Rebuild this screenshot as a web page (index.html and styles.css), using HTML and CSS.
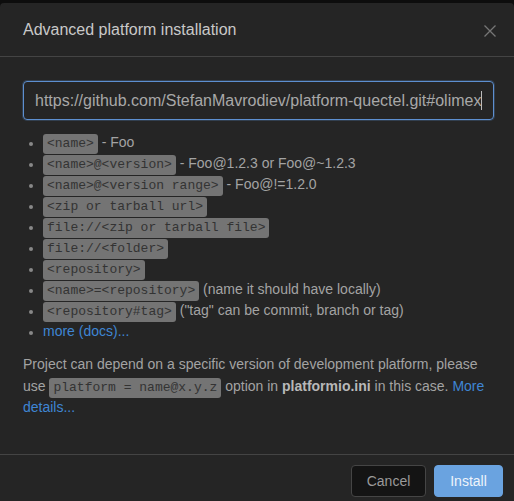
FILE: index.html
```html
<!DOCTYPE html>
<html>
<head>
<meta charset="utf-8">
<link rel="stylesheet" href="styles.css">
</head>
<body>
<div class="modal">
  <div class="header">
    <div class="title">Advanced platform installation</div>
    <svg class="close" width="14" height="14" viewBox="0 0 14 14"><path d="M1.5 1.5L12.5 12.5M12.5 1.5L1.5 12.5" stroke="#767676" stroke-width="1.3" fill="none"/></svg>
  </div>
  <div class="body">
    <div class="input">https://github.com/StefanMavrodiev/platform-quectel.git#olimex<span class="caret"></span></div>
    <ul class="list">
      <li><code>&lt;name&gt;</code> - Foo</li>
      <li><code>&lt;name&gt;@&lt;version&gt;</code> - Foo@1.2.3 or Foo@~1.2.3</li>
      <li><code>&lt;name&gt;@&lt;version range&gt;</code> - Foo@!=1.2.0</li>
      <li><code>&lt;zip or tarball url&gt;</code></li>
      <li><code>file://&lt;zip or tarball file&gt;</code></li>
      <li><code>file://&lt;folder&gt;</code></li>
      <li><code>&lt;repository&gt;</code></li>
      <li><code>&lt;name&gt;=&lt;repository&gt;</code> (name it should have locally)</li>
      <li><code>&lt;repository#tag&gt;</code> ("tag" can be commit, branch or tag)</li>
      <li><a class="link">more (docs)...</a></li>
    </ul>
    <p class="note">Project can depend on a specific version of development platform, please use <code>platform = name@x.y.z</code> option in <b>platformio.ini</b> in this case. <a class="link">More details...</a></p>
  </div>
  <div class="footer">
    <button class="btn cancel">Cancel</button>
    <button class="btn install">Install</button>
  </div>
</div>
</body>
</html>
```
FILE: styles.css
```css
html, body {
  margin: 0;
  padding: 0;
  background: #0d0d0d;
  font-family: "Liberation Sans", Arial, sans-serif;
  overflow: hidden;
}
.modal {
  margin-top: 3px;
  background: #252525;
  height: 520px;
  border-radius: 4px 4px 0 0;
}
.header {
  height: 53px;
  display: flex;
  align-items: center;
  justify-content: space-between;
  padding: 0 17px 0 23px;
  border-bottom: 1px solid #444;
}
.title {
  color: #c9c9c9;
  font-size: 16px;
  padding-top: 1px;
}
.close {
  display: block;
  margin-top: 2px;
}
.body {
  padding: 24px 20px 0 23px;
  height: 373px;
  border-bottom: 1px solid #444;
}
.input {
  box-sizing: border-box;
  height: 39px;
  width: 471px;
  border: 1px solid #5d8fd0;
  border-radius: 4px;
  box-shadow: 0 0 0 1px rgba(93,143,208,0.25);
  padding: 0 11px;
  display: flex;
  align-items: center;
  color: #a8a8a8;
  font-size: 16px;
  white-space: nowrap;
  overflow: hidden;
}
.caret {
  display: inline-block;
  width: 1px;
  height: 19px;
  background: #bbb;
}
.list {
  margin: 12px 0 0 0;
  padding: 0 0 0 20px;
  color: #a3a3a3;
  font-size: 14px;
  line-height: 21px;
}
.list li::marker {
  color: #888;
  font-size: 12px;
}
code {
  font-family: "Liberation Mono", "Courier New", monospace;
  font-size: 13px;
  line-height: 1;
  background: #747474;
  color: #333;
  padding: 2px 4px 3px;
  border-radius: 3px;
}
.link {
  color: #3f85d4;
  text-decoration: none;
}
.note {
  margin: 12px 0 0 0;
  color: #a3a3a3;
  font-size: 14px;
  line-height: 21.5px;
}
.note b {
  color: #b8b8b8;
}
.footer {
  display: flex;
  justify-content: flex-end;
  gap: 8px;
  padding: 10px 11px 0 0;
}
.btn {
  height: 32px;
  font-family: "Liberation Sans", Arial, sans-serif;
  font-size: 14px;
  border-radius: 4px;
  padding: 0 14px;
  cursor: pointer;
}
.cancel {
  background: #141414;
  border: 1px solid #454545;
  color: #9a9a9a;
  width: 75px;
}
.install {
  background: #6aa3e0;
  border: 1px solid #6aa3e0;
  color: #eef4fb;
  width: 69px;
}
```
